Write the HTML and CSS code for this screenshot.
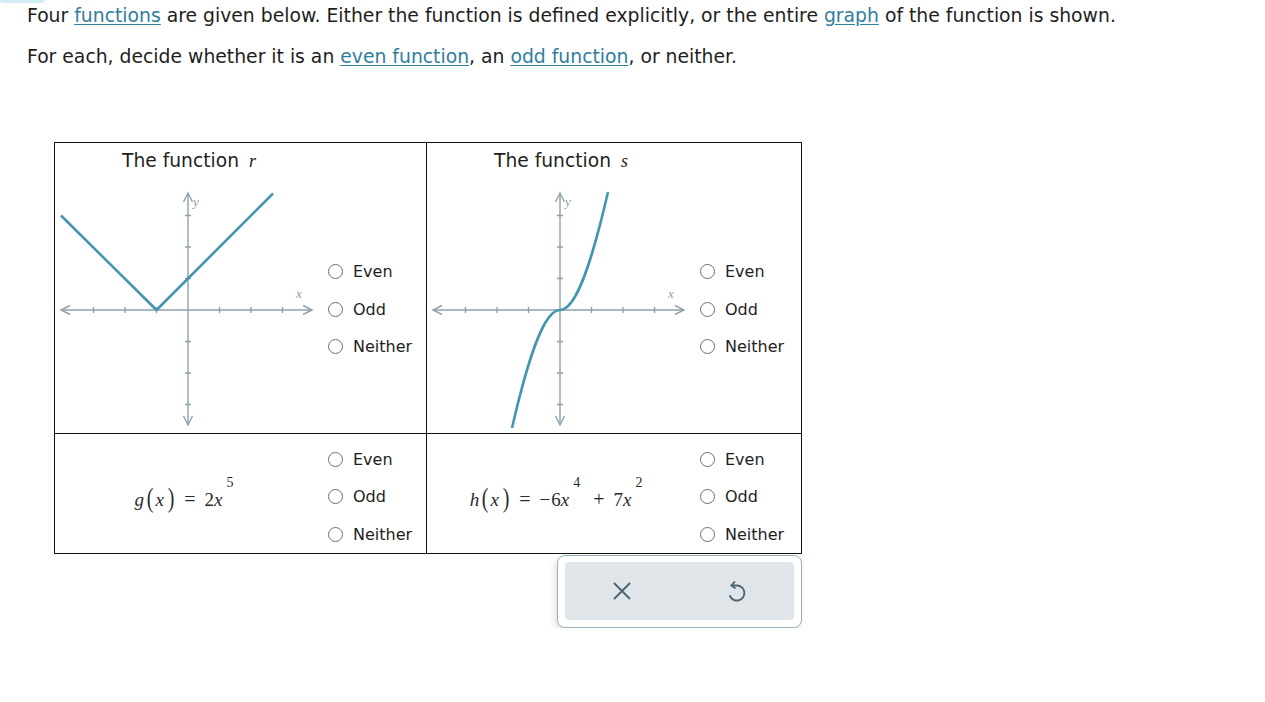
FILE: index.html
```html
<!DOCTYPE html>
<html>
<head>
<meta charset="utf-8">
<link rel="stylesheet" href="styles.css">
</head>
<body>
<div class="tabmark"></div>
<div class="content">
  <p class="intro">Four <a href="#">functions</a> are given below. Either the function is defined explicitly, or the entire <a href="#">graph</a> of the function is shown.</p>
  <p class="intro">For each, decide whether it is an <a href="#">even function</a>, an <a href="#">odd function</a>, or neither.</p>

  <div class="board">
    <div class="grid">
      <div class="cell graph-cell sep-right sep-bottom">
        <div class="title">The function <i class="var">r</i></div>
        <svg class="plot" width="266" height="246" viewBox="0 0 266 246">
          <g class="axes">
            <line x1="6" y1="124" x2="257" y2="124"/>
            <line x1="133" y1="7" x2="133" y2="239"/>
            <polyline points="15,119.5 6,124 15,128.5"/>
            <polyline points="248,119.5 257,124 248,128.5"/>
            <polyline points="128.5,16 133,7 137.5,16"/>
            <polyline points="128.5,230 133,239 137.5,230"/>
            <path d="M38.5 121v6M70 121v6M101.5 121v6M164.5 121v6M196 121v6M227.5 121v6M130 29.5h6M130 61h6M130 92.5h6M130 155.5h6M130 187h6M130 218.5h6"/>
          </g>
          <text class="axlabel" x="241" y="112">x</text>
          <text class="axlabel" x="138" y="20">y</text>
          <polyline class="curve" points="6,29.5 101.5,124 218,7.5"/>
        </svg>
        <div class="choices">
          <div class="choice"><span class="radio"></span>Even</div>
          <div class="choice"><span class="radio"></span>Odd</div>
          <div class="choice"><span class="radio"></span>Neither</div>
        </div>
      </div>
      <div class="cell graph-cell sep-bottom">
        <div class="title">The function <i class="var">s</i></div>
        <svg class="plot" width="266" height="246" viewBox="0 0 266 246">
          <g class="axes">
            <line x1="6" y1="124" x2="257" y2="124"/>
            <line x1="133" y1="7" x2="133" y2="239"/>
            <polyline points="15,119.5 6,124 15,128.5"/>
            <polyline points="248,119.5 257,124 248,128.5"/>
            <polyline points="128.5,16 133,7 137.5,16"/>
            <polyline points="128.5,230 133,239 137.5,230"/>
            <path d="M38.5 121v6M70 121v6M101.5 121v6M164.5 121v6M196 121v6M227.5 121v6M130 29.5h6M130 61h6M130 92.5h6M130 155.5h6M130 187h6M130 218.5h6"/>
          </g>
          <text class="axlabel" x="241" y="112">x</text>
          <text class="axlabel" x="138" y="20">y</text>
          <path class="curve" d="M85 242C103 164 118 124 133 124C148 124 163 84 181 6"/>
        </svg>
        <div class="choices">
          <div class="choice"><span class="radio"></span>Even</div>
          <div class="choice"><span class="radio"></span>Odd</div>
          <div class="choice"><span class="radio"></span>Neither</div>
        </div>
      </div>
      <div class="cell math-cell sep-right">
        <div class="math">
          <i>g</i><span class="paren">(</span><i class="arg">x</i><span class="paren">)</span><span class="op">=</span>2<i>x</i><sup>5</sup>
        </div>
        <div class="choices">
          <div class="choice"><span class="radio"></span>Even</div>
          <div class="choice"><span class="radio"></span>Odd</div>
          <div class="choice"><span class="radio"></span>Neither</div>
        </div>
      </div>
      <div class="cell math-cell">
        <div class="math">
          <i>h</i><span class="paren">(</span><i class="arg">x</i><span class="paren">)</span><span class="op">=</span><span class="minus">−</span>6<i>x</i><sup>4</sup><span class="op">+</span>7<i>x</i><sup>2</sup>
        </div>
        <div class="choices">
          <div class="choice"><span class="radio"></span>Even</div>
          <div class="choice"><span class="radio"></span>Odd</div>
          <div class="choice"><span class="radio"></span>Neither</div>
        </div>
      </div>
    </div>

    <div class="actions">
      <div class="btnbar">
        <button class="btn" type="button" aria-label="Clear">
          <svg width="18" height="18" viewBox="0 0 18 18"><path d="M1.5 1.5L16.5 16.5M16.5 1.5L1.5 16.5"/></svg>
        </button>
        <button class="btn" type="button" aria-label="Undo">
          <svg width="22" height="24" viewBox="0 0 22 24"><path d="M8.5 3L5.5 6.5L9 9"/><path d="M5.5 6.5H11A7.5 7.5 0 1 1 4 17"/></svg>
        </button>
      </div>
    </div>
  </div>
</div>
</body>
</html>
```

FILE: styles.css
```css
html, body {
  margin: 0;
  padding: 0;
  background: #ffffff;
}

body {
  font-family: "DejaVu Sans", Verdana, sans-serif;
  color: #1e1e1e;
}

.tabmark {
  position: absolute;
  left: 0;
  top: 0;
  width: 45px;
  height: 3px;
  background: #d3ecf6;
  border-radius: 0 0 3px 3px;
}

.content {
  padding: 4px 0 0 27px;
}

.intro {
  margin: 0 0 17px 0;
  font-size: 18.8px;
  line-height: 24px;
}

.intro a {
  color: #2f7e9e;
  text-decoration: underline;
  text-underline-offset: 2px;
}

.board {
  margin: 73px 0 0 27px;
  width: 748px;
}

.grid {
  display: grid;
  grid-template-columns: 372px 374px;
  grid-template-rows: 291px 119px;
  border: 1px solid #111;
}

.sep-right { border-right: 1px solid #111; }
.sep-bottom { border-bottom: 1px solid #111; }

.cell {
  display: grid;
  grid-template-columns: 266px auto;
}

.graph-cell {
  grid-template-rows: 43px 246px;
}

.title {
  grid-column: 1;
  grid-row: 1;
  padding-top: 7px;
  font-size: 18.7px;
  line-height: 22px;
  text-align: center;
  padding-left: 2px;
}

.var {
  font-family: "Liberation Serif", "Times New Roman", serif;
  font-size: 18px;
  margin-left: 4px;
}

.plot {
  grid-column: 1;
  grid-row: 2;
  display: block;
}

.axes line, .axes polyline, .axes path {
  stroke: #8ea1ab;
  stroke-width: 1.4;
  fill: none;
}

.axlabel {
  font-family: "Liberation Serif", "Times New Roman", serif;
  font-style: italic;
  font-size: 13px;
  fill: #8ea1ab;
}

.curve {
  stroke: #4396b0;
  stroke-width: 2.6;
  fill: none;
  stroke-linejoin: round;
}

.graph-cell .choices {
  grid-column: 2;
  grid-row: 2;
  align-self: center;
}

.choices {
  display: flex;
  flex-direction: column;
  margin-left: 7px;
}

.choice {
  display: flex;
  align-items: center;
  height: 37.5px;
  font-size: 16px;
  color: #1e1e1e;
}

.radio {
  width: 13px;
  height: 13px;
  border: 1.2px solid #6f6f6f;
  border-radius: 50%;
  margin-right: 10px;
  box-sizing: content-box;
}

.math-cell {
  align-items: center;
  padding-top: 6px;
}

.math {
  text-align: center;
  font-family: "Liberation Serif", "Times New Roman", serif;
  font-size: 19px;
  color: #2a2a2a;
  white-space: nowrap;
  padding-right: 4px;
}

.math i {
  font-style: italic;
}

.paren {
  display: inline-block;
  font-size: 19px;
  transform: scale(1.05, 1.4);
  margin: 0 1px 0 3px;
  position: relative;
  top: -1px;
}

.arg {
  margin: 0 1px;
}

.op {
  margin: 0 9px;
  font-size: 20px;
}

.minus {
  margin-right: 1px;
}

.math sup {
  font-size: 14px;
  vertical-align: 19px;
  line-height: 0;
  margin-left: 4px;
  margin-right: 4px;
}

.actions {
  display: flex;
  justify-content: flex-end;
  margin-top: 1px;
}

.btnbar {
  width: 229px;
  height: 58px;
  padding: 6px 7px 7px 7px;
  border: 1px solid #9bb0bb;
  border-radius: 8px;
  box-shadow: -2px 3px 6px rgba(60, 80, 95, 0.18);
  display: flex;
  background: #ffffff;
}

.btnbar .btn {
  flex: 1;
  border: 0;
  margin: 0;
  padding: 0;
  background: #dfe5e8;
  display: flex;
  align-items: center;
  justify-content: center;
  cursor: pointer;
}

.btnbar .btn:first-child {
  border-radius: 4px 0 0 4px;
}

.btnbar .btn:last-child {
  border-radius: 0 4px 4px 0;
}

.btn svg path {
  stroke: #4d6473;
  stroke-width: 1.9;
  fill: none;
  stroke-linecap: round;
  stroke-linejoin: round;
}
```
